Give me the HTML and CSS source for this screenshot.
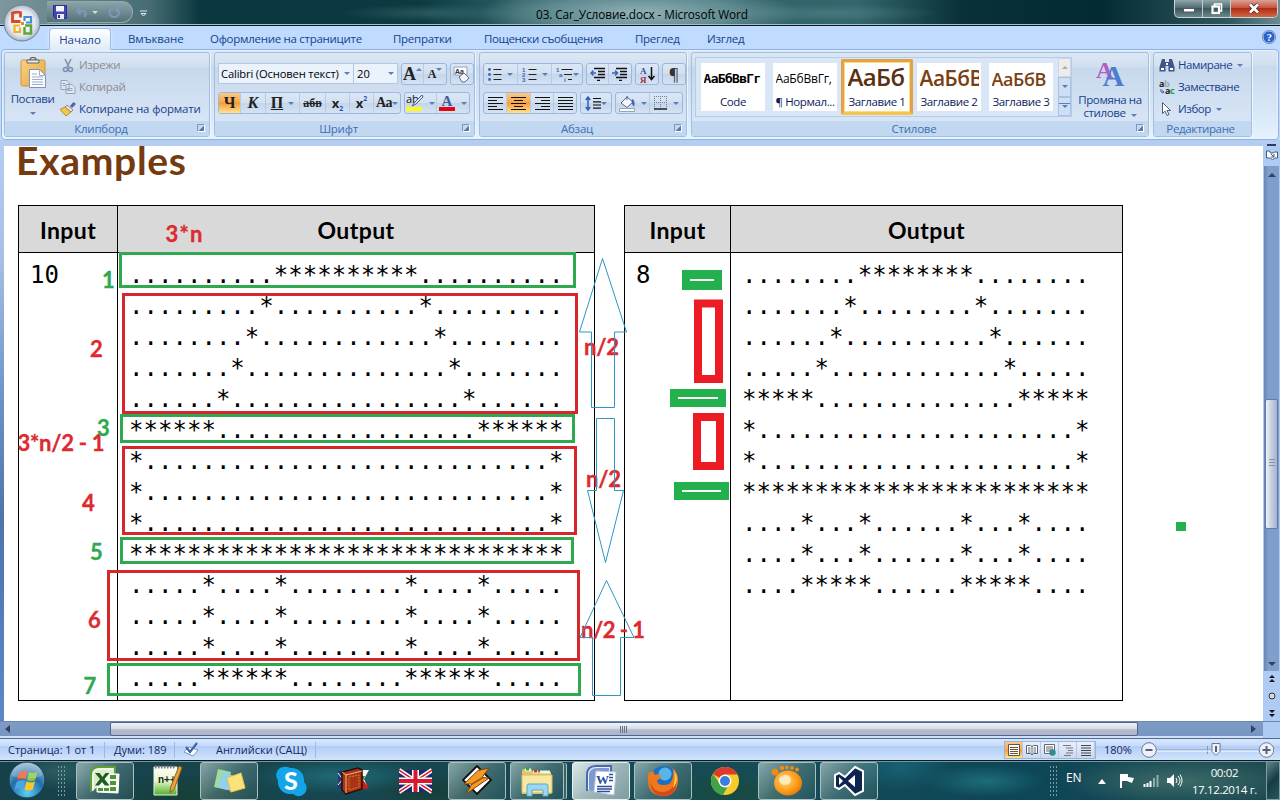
FILE: index.html
```html
<!DOCTYPE html>
<html lang="bg">
<head>
<meta charset="utf-8">
<title>03. Car_Условие.docx - Microsoft Word</title>
<link rel="stylesheet" href="styles.css">
</head>
<body>
<svg width="0" height="0" class="defs">
  <defs>
    <radialGradient id="gOrb" cx=".5" cy=".85" r=".9"><stop offset="0" stop-color="#5fd0f5"/><stop offset=".5" stop-color="#1f6fa8"/><stop offset="1" stop-color="#a9c8d8"/></radialGradient>
    <radialGradient id="gOffice" cx=".5" cy=".5" r=".5"><stop offset="0" stop-color="#fff"/><stop offset=".7" stop-color="#e4e9f1"/><stop offset="1" stop-color="#aab7cb"/></radialGradient>
    <radialGradient id="gGom" cx=".4" cy=".4" r=".7"><stop offset="0" stop-color="#ffd77a"/><stop offset=".6" stop-color="#ff9d1c"/><stop offset="1" stop-color="#e26f00"/></radialGradient>
    <linearGradient id="gNote" x1="0" y1="0" x2="0" y2="1"><stop offset="0" stop-color="#fff"/><stop offset=".5" stop-color="#e6f6c8"/><stop offset="1" stop-color="#4fae28"/></linearGradient>
    <linearGradient id="gClip" x1="0" y1="0" x2="1" y2="1"><stop offset="0" stop-color="#f9d283"/><stop offset="1" stop-color="#e5a640"/></linearGradient>
  </defs>
</svg>

<header class="titlebar">
  <div class="qat">
    <svg width="14" height="14" viewBox="0 0 14 14"><path d="M.5.5h13v13h-11l-2-2z" fill="#4443b5" stroke="#302f8c"/><path d="M3 1h8v5.5H3z" fill="#f3f5ff"/><path d="M4 9h7v5H4z" fill="#e8ebfa"/><path d="M5 10h2v3H5z" fill="#302f8c"/></svg>
    <svg class="undo" width="13" height="12" viewBox="0 0 14 14"><path d="M2 6h6a3.500 3.500 0 0 1 2 6.500M6 1.500L1.500 6 6 10" fill="none" stroke="#7e98b8" stroke-width="2.400"/></svg>
    <i class="tri light"></i>
    <svg class="redo" width="13" height="13" viewBox="0 0 14 14"><path d="M3 3.500a5 5 0 1 0 7.500 0M6 3H1.500M13.500 1.500h-4v5" fill="none" stroke="#7e98b8" stroke-width="2.300"/></svg>
  </div>
  <svg class="qat-more" width="7" height="7" viewBox="0 0 7 7"><path d="M0 1h7M1 3.500h5L3.500 6z" stroke="#d7eaf0" fill="none"/></svg>
  <div class="title">03. Car_Условие.docx - Microsoft Word</div>
  <div class="winbtns">
    <span class="wb"><svg width="12" height="12" viewBox="0 0 12 12"><rect x=".5" y="5.500" width="11" height="3.500" fill="#fff" stroke="#556"/></svg></span>
    <span class="wb"><svg width="12" height="12" viewBox="0 0 12 12"><path d="M3.500 3V1h7v7H9" fill="none" stroke="#fff" stroke-width="1.600"/><rect x="1.500" y="3.500" width="6.500" height="6.500" fill="none" stroke="#fff" stroke-width="2.200"/></svg></span>
    <span class="wb close"><svg width="12" height="11" viewBox="0 0 12 11"><path d="M2 1.500l8 8M10 1.500l-8 8" stroke="#4a2020" stroke-width="4.200"/><path d="M2 1.500l8 8M10 1.500l-8 8" stroke="#fff" stroke-width="2.800"/></svg></span>
  </div>
</header>
<svg class="office" width="40" height="40" viewBox="0 0 40 40"><circle cx="20" cy="20" r="18" fill="url(#gOffice)" stroke="#6d8098"/><g fill="none"><path d="M18.500 18.500h-8v-8.500q4-1.500 8-.5v5" stroke="#dc4a1b" stroke-width="2.800"/><path d="M22.500 18v-4h6.500v5.500h-5" stroke="#4a8ed2" stroke-width="2.200"/><path d="M18 22.500h-5.500v6.500H18v-4.500" stroke="#f0b41a" stroke-width="2.200"/><path d="M22.500 24v6.500h6.500v-8h-6" stroke="#5da63a" stroke-width="2.500"/></g><path d="M19 19h3v3h-3z" fill="#e8852a"/></svg>

<nav class="tabs">
  <span class="tab active">Начало</span>
  <span class="tab t1">Вмъкване</span><span class="tab t2">Оформление на страниците</span><span class="tab t3">Препратки</span><span class="tab t4">Пощенски съобщения</span><span class="tab t5">Преглед</span><span class="tab t6">Изглед</span>
  <svg class="help" width="14" height="14" viewBox="0 0 14 14"><circle cx="7" cy="7" r="6.200" fill="#2c63c8" stroke="#dbe8fb"/><circle cx="7" cy="7" r="6.700" fill="none" stroke="#3b5f9c" stroke-width=".6"/><text x="7" y="11" text-anchor="middle" class="q">?</text></svg>
</nav>

<section class="ribbon">
  <div class="group g-clip">
    <div class="gbody">
      <div class="paste">
        <svg width="28" height="32" viewBox="0 0 28 32"><rect x="1" y="3" width="24" height="26" rx="1.500" fill="url(#gClip)" stroke="#c99a3f"/><path d="M7 3h12v3H7z" fill="#e9e9ec" stroke="#63656b"/><path d="M10 3a3 2.600 0 0 1 6 0" fill="none" stroke="#63656b" stroke-width="1.400"/><path d="M9.500 12.500h10l6 6v12h-16z" fill="#fbfcff" stroke="#7e93b3"/><path d="M19.500 12.500v6h6M12 17h5M12 20h11M12 22.500h11M12 25h11M12 27.500h11" fill="none" stroke="#9cafc9"/></svg>
        <span>Постави</span><i class="tri"></i>
      </div>
      <div class="cliplist">
        <div class="off"><svg width="14" height="15" viewBox="0 0 14 15"><path d="M4 1l4 8M10 1L6 9" stroke="#7f93ad" stroke-width="1.600"/><circle cx="4.500" cy="11.500" r="2" fill="none" stroke="#7a90ae" stroke-width="1.500"/><circle cx="9.500" cy="11.500" r="2" fill="none" stroke="#7a90ae" stroke-width="1.500"/></svg><span class="cut">Изрежи</span></div>
        <div class="off"><svg width="15" height="14" viewBox="0 0 15 14"><path d="M.5.5h6l2 2v7h-8zM5.500 4.500h6l3 3v6h-9z" fill="#dde6f1" stroke="#93a4bb"/><path d="M2 3.500h3M2 5.500h3M7 8.500h5M7 10.500h5" stroke="#93a4bb"/></svg><span class="cut">Копирай</span></div>
        <div><svg width="16" height="14" viewBox="0 0 16 14"><path d="M10 4l3.500-4L16 2l-4 4z" fill="#4d64a0"/><path d="M7 3l6 5-2 2-6-5z" fill="#e8e8ea" stroke="#666" stroke-width=".7"/><path d="M5 5L0 7.500l6 6.500 5-4z" fill="#f2c94f" stroke="#a47a1d" stroke-width=".8"/></svg><span class="fmt">Копиране на формати</span></div>
      </div>
    </div>
    <div class="glabel"><span>Клипборд</span><i class="dlg"></i></div>
  </div>

  <div class="group g-font">
    <div class="gbody rows">
      <div class="row">
        <div class="combo c1"><span>Calibri (Основен текст)</span><i class="tri"></i></div><div class="combo c2"><span>20</span><i class="tri"></i></div>
        <div class="box m3"><b class="btn ser w22"><em class="n17">A</em><i class="up"></i></b><b class="btn ser w22"><em class="n12">A</em><i class="tri tp"></i></b></div>
        <div class="box m3"><b class="btn w22"><svg width="18" height="17" viewBox="0 0 18 17"><path d="M1 1h13v8H1z" fill="#fff" stroke="#8ba2c4"/><text x="2" y="8" class="aa">Aa</text><path d="M6 11l5-4 5 5-4 4H9z" fill="#f5f5f8" stroke="#5a6d8c"/></svg></b></div>
      </div>
      <div class="row r2">
        <div class="box"><b class="btn ser on w22"><em class="n15">Ч</em></b><b class="btn ser w25"><em class="n15 it">К</em></b><b class="btn ser w34"><em class="n15 un">П</em><i class="tri ml"></i></b><b class="btn ser w27"><em class="n12 st">абв</em></b><b class="btn w24"><em class="n13">x</em><sub>2</sub></b><b class="btn w24"><em class="n13">x</em><sup>2</sup></b><b class="btn ser w27"><em class="n14">Aa</em><i class="tri"></i></b></div>
        <div class="box m3"><b class="btn w33"><svg width="18" height="18" viewBox="0 0 18 18"><text x="0" y="9" class="ab">ab</text><path d="M16 1L9 8l-3 4 4-2 7-7z" fill="#dfe6f3" stroke="#4c5e84"/><path d="M0 13h16v4H0z" fill="#fdfb1c"/></svg><i class="tri ml"></i></b><b class="btn w33"><svg width="17" height="18" viewBox="0 0 17 18"><text x="8" y="11.500" text-anchor="middle" class="fa">A</text><path d="M0 13h16v4H0z" fill="#e4060f"/></svg><i class="tri ml"></i></b></div>
      </div>
    </div>
    <div class="glabel"><span>Шрифт</span><i class="dlg"></i></div>
  </div>

  <div class="group g-par">
    <div class="gbody rows">
      <div class="row">
        <div class="box"><b class="btn w34"><svg width="14" height="13" viewBox="0 0 14 13"><path d="M5.500 1.500h8M5.500 6.500h8M5.500 11.500h8" stroke="#222"/><circle cx="1.500" cy="1.500" r="1.400" fill="#3f62ad"/><circle cx="1.500" cy="6.500" r="1.400" fill="#3f62ad"/><circle cx="1.500" cy="11.500" r="1.400" fill="#3f62ad"/></svg><i class="tri ml"></i></b><b class="btn w34"><svg width="15" height="15" viewBox="0 0 15 15"><path d="M6.500 2.500h8M6.500 7.500h8M6.500 12.500h8" stroke="#222"/><g class="num"><text x="0" y="5">1</text><text x="0" y="10">2</text><text x="0" y="15">3</text></g></svg><i class="tri ml"></i></b><b class="btn w30"><svg width="17" height="15" viewBox="0 0 17 15"><path d="M5.500 2.500h11M8 7.500h8M12 12.500h4" stroke="#222"/><g class="num"><text x="0" y="5">1</text><text x="3" y="10">a</text><text x="8" y="15">i</text></g></svg><i class="tri"></i></b></div>
        <div class="box m3"><b class="btn w22"><svg width="16" height="14" viewBox="0 0 16 14"><path d="M4 1.500h11M8 4.500h7M8 7.500h7M4 10.500h11M7 13.500h3" stroke="#111" stroke-width="1.500"/><path d="M6 6H1M3.500 3.500L1 6l2.500 2.500" stroke="#3a62b4" stroke-width="1.500" fill="none"/></svg></b><b class="btn w22"><svg width="16" height="14" viewBox="0 0 16 14"><path d="M4 1.500h11M8 4.500h7M8 7.500h7M4 10.500h11M7 13.500h3" stroke="#111" stroke-width="1.500"/><path d="M0 6h5M3 3.500L5.500 6 3 8.500" stroke="#3a62b4" stroke-width="1.500" fill="none"/></svg></b></div>
        <div class="box m3"><b class="btn w22"><svg width="15" height="17" viewBox="0 0 15 17"><text x="0" y="8" class="srt b">А</text><text x="0" y="17" class="srt r">Я</text><path d="M11.500 1v12M8.500 10l3 3.500 3-3.500" fill="none" stroke="#111" stroke-width="1.500"/></svg></b></div>
        <div class="box m3"><b class="btn w22"><em class="pil">¶</em></b></div>
      </div>
      <div class="row r2">
        <div class="box"><b class="btn w23"><svg width="15" height="13" viewBox="0 0 15 13"><path d="M0 .5h15M0 3.500h9M0 6.500h15M0 9.500h9M0 12.500h15" stroke="#111"/></svg></b><b class="btn on w24"><svg width="15" height="13" viewBox="0 0 15 13"><path d="M0 .5h15M3 3.500h9M0 6.500h15M3 9.500h9M0 12.500h15" stroke="#111"/></svg></b><b class="btn w23"><svg width="15" height="13" viewBox="0 0 15 13"><path d="M0 .5h15M6 3.500h9M0 6.500h15M6 9.500h9M0 12.500h15" stroke="#111"/></svg></b><b class="btn w22"><svg width="15" height="13" viewBox="0 0 15 13"><path d="M0 .5h15M0 3.500h15M0 6.500h15M0 9.500h15M0 12.500h15" stroke="#111"/></svg></b></div>
        <div class="box m3"><b class="btn w30"><svg width="16" height="17" viewBox="0 0 16 17"><path d="M8 3.500h8M8 6.800h8M8 10h8M8 13.200h8" stroke="#111" stroke-width="1.200"/><path d="M3 2v13M.8 5L3 2l2.200 3M.8 12L3 15l2.200-3" fill="none" stroke="#2f5fb3" stroke-width="1.500"/></svg><i class="tri"></i></b></div>
        <div class="box m3"><b class="btn w34"><svg width="17" height="17" viewBox="0 0 17 17"><path d="M2 8l6-6 6 5-6 5.500z" fill="#f6f8fb" stroke="#51658a"/><path d="M8 5V1" stroke="#51658a"/><path d="M13 4c3 1 3 5 2 8-1-2-3-3-2-8z" fill="#3a66b6"/><path d="M.5 13.500h15v3H.5z" fill="#fff" stroke="#97a3b6"/></svg><i class="tri ml"></i></b><b class="btn w33"><svg width="14" height="14" viewBox="0 0 14 14"><path d="M.5 0v13M6.500 0v13M12.500 0v13M0 .5h13M0 6.500h13" stroke="#6d7c92" stroke-dasharray="1 1"/><path d="M0 13h13" stroke="#222" stroke-width="1.500"/></svg><i class="tri ml"></i></b></div>
      </div>
    </div>
    <div class="glabel"><span>Абзац</span><i class="dlg"></i></div>
  </div>

  <div class="group g-sty">
    <div class="gbody">
      <div class="gallery">
        <div class="sty"><div class="s code">АаБбВвГг</div><div class="nm">Code</div></div>
        <div class="sty"><div class="s norm">АаБбВвГг,</div><div class="nm">¶ Нормал...</div></div>
        <div class="sty sel"><div class="s h1">АаБб</div><div class="nm">Заглавие 1</div></div>
        <div class="sty"><div class="s h2">АаБбВ</div><div class="nm">Заглавие 2</div></div>
        <div class="sty"><div class="s h3">АаБбВ</div><div class="nm">Заглавие 3</div></div>
        <div class="gscroll"><span class="dis"><i class="up"></i></span><span><i class="tri"></i></span><span class="more"><i class="tri"></i></span></div>
      </div>
      <div class="change">
        <svg width="30" height="30" viewBox="0 0 30 30"><text x="1" y="20" class="ca">A</text><text x="7.500" y="28" class="cb">A</text></svg>
        <span class="cl1">Промяна на</span><span class="cl2">стилове<i class="tri ml"></i></span>
      </div>
    </div>
    <div class="glabel"><span>Стилове</span><i class="dlg"></i></div>
  </div>

  <div class="group g-edit">
    <div class="gbody"><div class="cliplist">
      <div><svg width="16" height="14" viewBox="0 0 16 14"><path d="M3 1h3v3h4V1h3l2.500 8v4.500h-6V8h-3v5.500h-6V9z" fill="#3e5688"/><path d="M2 10h3v2H2zM11 10h3v2h-3zM7 5h2v2H7z" fill="#fff"/></svg><span>Намиране</span><i class="tri ml"></i></div>
      <div><svg width="16" height="15" viewBox="0 0 16 15"><text x="0" y="7" class="rep">a<tspan fill="#9aa">b</tspan></text><text x="6" y="14" class="rep">a<tspan fill="#1fa32a">c</tspan></text><path d="M2 9v3h3M3.500 10.500L5 12l-1.500 1.500" fill="none" stroke="#3a5ea8"/></svg><span>Заместване</span></div>
      <div><svg width="16" height="14" viewBox="0 0 16 14"><path d="M3.500.5v11l2.600-2.400L8 13.500l2-1-2-4h3.500z" fill="#fff" stroke="#4b5f80"/></svg><span>Избор</span><i class="tri ml"></i></div>
    </div></div>
    <div class="glabel"><span>Редактиране</span></div>
  </div>
</section>

<main class="work">
  <div class="doc">
    <h1>Examples</h1>
    <div class="tables">
      <div class="tbl left">
        <div class="th">Input</div><div class="th">Output</div>
        <div class="td">10</div>
        <pre class="td out">..........**********..........
.........*..........*.........
........*............*........
.......*..............*.......
......*................*......
******..................******
*............................*
*............................*
*............................*
******************************
.....*....*........*....*.....
.....*....*........*....*.....
.....*....*........*....*.....
.....******........******.....</pre>
      </div>
      <div class="tbl right">
        <div class="th">Input</div><div class="th">Output</div>
        <div class="td">8</div>
        <pre class="td out">........********........
.......*........*.......
......*..........*......
.....*............*.....
*****..............*****
*......................*
*......................*
************************
....*...*......*...*....
....*...*......*...*....
....*****......*****....</pre>
      </div>
    </div>
  </div>
  <aside class="vscroll">
    <span class="split"></span>
    <svg class="ruler" width="12" height="11" viewBox="0 0 12 11"><path d="M.5 1h3l1 2h3l1-1h3v6h-3l-2 2-2-2h-4z" fill="#fff" stroke="#44577d"/><path d="M5 4l3 3M8 4v3H5" stroke="#44577d" fill="none"/></svg>
    <div class="vtrack"><i class="up dk"></i><div class="vthumb"></div><i class="tri dk"></i></div>
    <div class="vnav"><svg width="8" height="8" viewBox="0 0 8 8"><path d="M4 0l3 3H1zM4 4l3 3H1z" fill="#111"/></svg><svg width="8" height="8" viewBox="0 0 8 8"><circle cx="4" cy="4" r="3" fill="#d5d9df" stroke="#333"/></svg><svg width="8" height="8" viewBox="0 0 8 8"><path d="M4 4L1 1h6zM4 8L1 5h6z" fill="#111"/></svg></div>
  </aside>
</main>
<svg class="marks" width="1280" height="560" viewBox="0 150 1280 560">
  <g fill="none" stroke-width="3" stroke="#2ea94f">
    <rect x="120.500" y="253.500" width="454" height="33"/><rect x="121.500" y="415.500" width="452" height="26"/><rect x="121.500" y="538.500" width="451" height="24"/><rect x="108.500" y="664.500" width="471" height="30"/>
  </g>
  <g fill="none" stroke-width="3" stroke="#d8262d">
    <rect x="123.500" y="294.500" width="453" height="118"/><rect x="123.500" y="447.500" width="452" height="86"/><rect x="108.500" y="571.500" width="470" height="88"/>
  </g>
  <g fill="#22b14c"><path d="M682 270h40v20h-40zM670 389h56v18h-56zM674 482h55v18h-55zM1176 522h10v9h-10z"/></g>
  <path d="M690 280h24M678 398h40M682 491h39" stroke="#fff" stroke-width="2"/>
  <g fill="none" stroke="#ed1c24" stroke-width="8"><rect x="698" y="303.500" width="21" height="75.500"/><rect x="697" y="417" width="23" height="49"/></g>
  <g class="lab red"><text x="165.500" y="242" textLength="37">3*n</text><text x="90" y="357">2</text><text x="17.500" y="451" textLength="87">3*n/2 - 1</text><text x="82" y="511">4</text><text x="88" y="628">6</text><text x="584" y="355" textLength="35">n/2</text><text x="586" y="487" textLength="35">n/2</text><text x="581" y="638" textLength="64">n/2 - 1</text></g>
  <g class="lab green"><text x="102" y="287.500">1</text><text x="97" y="435.500">3</text><text x="90" y="559.500">5</text><text x="83.500" y="693.500">7</text></g>
  <g fill="none" stroke="#2d97c2"><path d="M602.500 258.500l24 73.500h-12v75.500h-23V332h-12zM596.500 418.500h18v72h9l-18 72-18-72h9zM606.500 580.500l27.500 57h-13.500v58h-28v-58H580z"/></g>
</svg>

<div class="hscroll"><div class="htrack"><i class="lt"></i><div class="hthumb"><u></u><u></u><u></u><u></u></div><i class="rt"></i></div></div>

<footer class="status">
  <span class="st1">Страница: 1 от 1</span><span class="st2">Думи: 189</span>
  <span class="st3"><svg width="17" height="15" viewBox="0 0 17 15"><path d="M1 10l5-5 9 3-5 6z" fill="#fff" stroke="#7b92bb"/><path d="M3 5l4 5 7-9" fill="none" stroke="#3e62a8" stroke-width="2.200"/></svg></span><span class="st4">Английски (САЩ)</span>
  <span class="views">
    <b class="on"><svg width="12" height="12" viewBox="0 0 12 12"><path d="M.5.5h11v11H.5z" fill="#fff" stroke="#67543a"/><path d="M2 3.500h8M2 5.500h8M2 7.500h8M2 9.500h8" stroke="#67543a"/></svg></b>
    <b><svg width="12" height="12" viewBox="0 0 12 12"><path d="M.5 1.500h4l1.500 1 1.500-1h4v8h-4L6 11 4.500 9.500h-4zM6 2.500V11M2 4h2.500M2 6h2.500M2 8h2.500M7.500 4H10M7.500 6H10M7.500 8H10" fill="#fff" stroke="#5a6473"/></svg></b>
    <b><svg width="12" height="12" viewBox="0 0 12 12"><path d="M.5.5h10v9H.5z" fill="#fff" stroke="#666"/><path d="M2 3h7M2 5h7M2 7h4" stroke="#666"/><circle cx="8.500" cy="8.500" r="3.200" fill="#2f8d8f"/></svg></b>
    <b><svg width="12" height="12" viewBox="0 0 12 12"><path d="M1 1.500h8M4 4h7M6 6.500h5M4 9h7M2 11.500h7" stroke="#777"/></svg></b>
    <b><svg width="12" height="12" viewBox="0 0 12 12"><path d="M1 1.500h10M1 4h10M1 6.500h10M1 9h10M1 11.500h10" stroke="#444"/></svg></b>
  </span>
  <span class="pct">180%</span>
  <svg class="zoomer" width="134" height="18" viewBox="0 0 134 18"><path d="M17 9h101M67.500 5v8" stroke="#8295b8"/><path d="M17 10h101" stroke="#fff"/><g fill="#eef2f8" stroke="#6b7b94"><circle cx="9" cy="9" r="7.300"/><circle cx="126.500" cy="9" r="7.300"/><path d="M72 2.500h8v8l-4 4-4-4z"/></g><path d="M5.500 9h7M122.500 9h8M126.500 5v8M76 5v6" stroke="#54627c" stroke-width="2"/></svg>
</footer>

<footer class="taskbar">
  <div class="start"><svg width="38" height="38" viewBox="0 0 38 38"><circle cx="19" cy="19" r="18" fill="url(#gOrb)" stroke="#17394a"/><path d="M11 11.500q4.500-3 8.500-1l-2 8q-4-2-8.500 1z" fill="#e8552a"/><path d="M21 11q4 2 8.500 0l-2.200 8q-4 2-8.300 0z" fill="#8cc63c"/><path d="M8.500 21q4.500-3 8.500-1l-2 8q-4-2-8.500 1z" fill="#4aa5e3"/><path d="M18.500 20.500q4 2 8.500 0l-2.200 8q-4 2-8.300 0z" fill="#fbc62a"/><path d="M4 15a15 13 0 0 1 30 0q-15 5-30 0z" fill="#fff" opacity=".22"/></svg></div>
  <i class="grip"></i>
  <div class="slots">
    <div class="slot run"><svg width="32" height="32" viewBox="0 0 32 32"><path d="M2 27V10q0-8 8-8h16v6" fill="#dcefcf" stroke="#5ca033" stroke-width="2"/><path d="M4 26V10q0-6 6-6h14" fill="none" stroke="#fff"/><path d="M5 7l15-1v15H5z" fill="#d9ecca"/><path d="M17 9h13l-1 19-21-1v-6" fill="#f6fbf2" stroke="#fff"/><path d="M21 10h6v4h-6zM21 16h6v4h-6zM21 22h6v4h-6zM9 23h5v3H9zM15 23h5v3h-5z" fill="#4f9438"/><path d="M6 8h4.500l3 4 3-4h4L15.500 14l5 6.500H16L13 17l-3 3.500H6L11 14z" fill="#1f5c1f"/></svg></div>
    <div class="slot"><svg width="32" height="32" viewBox="0 0 32 32"><path d="M3 2h23v28H3z" fill="url(#gNote)" stroke="#e8f2e3"/><path d="M4 2h21" stroke="#777" stroke-width="3" stroke-dasharray="1.500 1.500"/><text x="7" y="18" class="npp">n++</text><path d="M28 1l3 1.500-8 22-4 3 .500-5z" fill="#e8a43b" stroke="#8f5d22"/></svg></div>
    <div class="slot run"><svg width="34" height="32" viewBox="0 0 34 32"><path d="M6 4l13 3-4 18L2 22z" fill="#9edc9b"/><path d="M11 7l13 5-5 14-13-4z" fill="#8fd0ef"/><path d="M15 13l14-5 4 15-14 4z" fill="#fbe27a" stroke="#e7c84a"/></svg></div>
    <div class="slot"><svg width="32" height="32" viewBox="0 0 32 32"><path d="M9 2a8 8 0 0 1 6 1c8-1 15 5 14 14a8 8 0 0 1-11 12C9 30 2 24 3 15A8 8 0 0 1 9 2z" fill="#12a5e8"/><text x="16" y="25" text-anchor="middle" class="sky">S</text></svg></div>
    <div class="slot"><svg width="32" height="32" viewBox="0 0 32 32"><path d="M1 6h12v18H1z" fill="#26357e"/><path d="M1 8l9 12M1 20l9-11" stroke="#eee"/><path d="M17 5h15l-5 9 4 9H18z" fill="#f5f3ee"/><path d="M20 11h8l-2 5 1 3h-7z" fill="#288a3a"/><path d="M21 20l5-5 6 8-9 2z" fill="#d21a1d"/><path d="M5 7l16-4 4 2v19l-16 5-4-4z" fill="#a83416" stroke="#2a0d07" stroke-width="1.500"/><path d="M9 9v19M5 7l4 3 16-4" stroke="#e6b98d" fill="none"/><path d="M12 12l10-2v12l-10 3z" fill="none" stroke="#e07a2c" stroke-dasharray="2 1"/></svg></div>
    <div class="slot"><svg width="33" height="32" viewBox="0 0 33 32"><path d="M0 5h33v22H0z" fill="#20286e"/><path d="M0 5l33 22M33 5L0 27" stroke="#fff" stroke-width="4.500"/><path d="M0 5l33 22M33 5L0 27" stroke="#d8182c" stroke-width="1.500"/><path d="M16.500 5v22M0 16h33" stroke="#fff" stroke-width="7"/><path d="M16.500 5v22M0 16h33" stroke="#d8182c" stroke-width="4"/></svg></div>
    <div class="slot run"><svg width="32" height="32" viewBox="0 0 32 32"><path d="M16 1l14 14-14 14L2 15z" fill="#fff" stroke="#111" stroke-width="1.800"/><path d="M28 3l-7 9.500 7 .500L5 29l6-10-8 0L17 5.500z" fill="#f59a23" stroke="#774410"/><path d="M11 19l11-6.500" stroke="#9b5717" stroke-width="1.500"/></svg></div>
    <div class="slot run stack"><svg width="34" height="32" viewBox="0 0 34 32"><path d="M2 6q0-2 2-2h7l2 3h18v22H2z" fill="#e4c465"/><path d="M2 10h30v18H2z" fill="#f8e6a3" stroke="#d9bb62"/><path d="M5 5h6M13 7h5M20 7h10" stroke="#e8f5e0" stroke-width="3"/><path d="M6 4h3" stroke="#36a832" stroke-width="3"/><path d="M14 6h3" stroke="#c93a26" stroke-width="3"/><path d="M7 31V21q0-2 2-2h17q2 0 2 2v10h-5v-6H12v6z" fill="#9bd7ee" stroke="#5aa8cb"/></svg></div>
    <div class="slot run bright"><svg width="32" height="32" viewBox="0 0 32 32"><path d="M2 26V10q0-9 9-9h15v7" fill="#e9effa" stroke="#4769b0" stroke-width="2"/><path d="M4 25V11q0-8 8-8h12v5l-14 1v17z" fill="#7d99cd"/><path d="M11 6l20 1-2 23-20-3z" fill="#fff" stroke="#b9c6df"/><text x="11" y="19" class="wd">W</text><path d="M24 9.500h4M24 12.500h4M24 15.500h4M12 21.500h15M12 24h15M12 26.500h13" stroke="#2b4f99" stroke-width="1.500"/></svg></div>
    <div class="slot run"><svg width="32" height="32" viewBox="0 0 32 32"><circle cx="17" cy="15" r="14" fill="#1d6fc0"/><circle cx="18" cy="9" r="6.500" fill="#59b5e8"/><path d="M2 7q2 1 4-1l2 4q4-2 6 2 0 2-4 3 0 5 6 5 9 1 10-9 1-5-1-8 7 5 6 14-2 14-15 14Q1 30 1 16 0 11 2 7z" fill="#f0781c"/><path d="M3 17q3 10 13 10 9 0 13-11 1 15-13 15-12-1-13-14z" fill="#d9471b"/><path d="M27 5q6 10-1 18 3-10 1-18z" fill="#ffd546"/></svg></div>
    <div class="slot"><svg width="32" height="32" viewBox="0 0 32 32"><circle cx="16" cy="16" r="14" fill="#f8ca2a"/><path d="M16 16L4 9A14 14 0 0 1 28.500 9.500H16z" fill="#dc3a2c"/><path d="M4 9a14 14 0 0 0 10 21l6-11-4 2-5-2z" fill="#3fa34a"/><circle cx="16" cy="16" r="6.500" fill="#fff"/><circle cx="16" cy="16" r="5" fill="#3e7de0"/></svg></div>
    <div class="slot run"><svg width="32" height="32" viewBox="0 0 32 32"><g fill="#f08a16"><circle cx="4" cy="7" r="3.500"/><circle cx="11" cy="3" r="2.300"/><circle cx="16" cy="2.500" r="2"/><circle cx="21" cy="3" r="2"/><circle cx="26" cy="4.500" r="2"/></g><ellipse cx="17" cy="18" rx="14" ry="12.500" fill="url(#gGom)"/><ellipse cx="14" cy="15" rx="6" ry="5" fill="#fff2d0" opacity=".8"/></svg></div>
    <div class="slot run"><svg width="32" height="32" viewBox="0 0 32 32"><path d="M22 2l8 4v20l-8 4L12 20l-6 4-4-2V10l4-2 6 4z" fill="#0f2350" stroke="#fff" stroke-width="2"/><path d="M6 12v8l4-4zM22 10v12l-7-6z" fill="#fff"/></svg></div>
  </div>
  <div class="tray">
    <i class="grip"></i><span class="en">EN</span>
    <svg class="ta" width="8" height="5" viewBox="0 0 8 5"><path d="M4 0l4 5H0z" fill="#fff"/></svg>
    <svg class="tf" width="16" height="15" viewBox="0 0 16 15"><path d="M2 1v14" stroke="#fff" stroke-width="2"/><path d="M3 1h6v3l6 1-2 5-5-2H3z" fill="#fff"/></svg>
    <svg class="tb" width="16" height="13" viewBox="0 0 16 13"><path d="M1.500 13v-3M4.500 13V9M7.500 13V7" stroke="#fff" stroke-width="2"/><path d="M11 13V4M14.500 13V1" stroke="#93aab0" stroke-width="2"/></svg>
    <svg class="tv" width="16" height="15" viewBox="0 0 16 15"><path d="M0 5h3l4-4v13l-4-4H0z" fill="#fff"/><path d="M9 5q2 2.500 0 5M11 3q4 4.500 0 9M13 1.500q4 6 0 12" fill="none" stroke="#fff"/></svg>
    <div class="clock"><span>00:02</span><span>17.12.2014 г.</span></div>
    <i class="desk"></i>
  </div>
</footer>
</body>
</html>
```
FILE: styles.css
```css
*{box-sizing:border-box}
html,body{margin:0;padding:0}
body{width:1280px;height:800px;overflow:hidden;position:relative;display:flex;flex-direction:column;font-family:"Open Sans","Noto Sans",sans-serif;font-size:11.5px;line-height:16px;color:#15428b;background:#bfdbff}
svg{flex:none;display:block}
.defs{position:absolute}
i,em{font-style:normal}
.tri,.up{display:inline-block;flex:none;width:0;height:0;border:3px solid transparent;border-bottom-width:0;border-top-color:#5a7fb5}
.up{border-width:0 3px 3px;border-bottom-color:#5a7fb5}
.tri.light{border-top-color:#d0dde3}
.tri.dk{border-width:4px 4px 0;border-top-color:#33415f}
.up.dk{border-width:0 4px 4px;border-bottom-color:#33415f}
.ml{margin-left:5px}

.titlebar{height:26px;flex:none;display:flex;align-items:flex-start;border-bottom:1px solid #021b22;box-shadow:inset 0 -1px #a5bfc4;background:radial-gradient(ellipse 160px 28px at 640px 13px,rgba(150,182,188,.95),rgba(120,160,166,.65) 60%,transparent),radial-gradient(ellipse 90px 9px at 430px 13px,rgba(90,140,145,.35),transparent),radial-gradient(ellipse 110px 9px at 830px 13px,rgba(110,155,160,.35),transparent),linear-gradient(90deg,#7d989d 0,#476c73 150px,#0a3840 200px,#0c3a42 420px,#2f6067 520px,#33656c 860px,#093139 960px,#042a33 1100px,#31585f 1230px,#6c8c91)}
.qat{width:86px;height:22px;margin:1px 0 0 47px;padding-left:6px;display:flex;align-items:center;gap:8px;border:1px solid #8fa9ae;border-left:0;border-radius:0 11px 11px 0;background:linear-gradient(#8ca3a8,#547279)}
.qat .tri{margin:0 2px 0 -4px}
.qat-more{margin:10px 0 0 7px}
.title{margin:6px 0 0 387px;width:216px;font-size:11.800px;letter-spacing:-.1px;color:#000;white-space:nowrap;text-align:center}
.winbtns{display:flex;margin-left:auto;margin-right:2px;height:18px;border:1px solid #c6d5d8;border-top:0;border-radius:0 0 5px 5px;background:linear-gradient(#91a6aa,#4b666c 50%,#3a575e 50%,#6b878c)}
.wb{display:flex;width:28px;align-items:center;justify-content:center;border-right:1px solid #bdcdd0}
.wb.close{width:46px;border:0;border-radius:0 0 4px 0;background:linear-gradient(#dba196,#c4513a 48%,#b12c13 50%,#d0684a)}
.office{position:absolute;left:2px;top:3px;z-index:2}

.tabs{height:23px;flex:none;display:flex;align-items:center;padding-left:48px;background:#bfdbff;position:relative;letter-spacing:-.28px}
.tab{white-space:nowrap;position:relative;top:1px}
.tab.active{letter-spacing:0;margin-left:1px;height:22px;width:62px;padding-top:3px;text-align:center;border:1px solid #9ebde9;border-bottom:0;border-radius:4px 4px 0 0;background:linear-gradient(#fff,#dfebf9);box-shadow:0 0 3px #e8f4ff}
.t1{margin-left:17px;width:82px;letter-spacing:-.1px}.t2{width:183px}.t3{width:91px}.t4{width:151px;letter-spacing:-.4px}.t5{width:72px}
.help{position:absolute;left:1262px;top:4px}
.q{font:bold 11px "Liberation Serif",serif;fill:#fff}

.ribbon{height:91px;flex:none;display:flex;gap:4px;margin:0 1px;padding:3px 0 4px 2px;border:1px solid #8db2e3;border-radius:4px;background:linear-gradient(#dbe6f4,#cfdded 18%,#c9d9ed 18%,#dcebfa 80%,#e6f4fd);box-shadow:inset 0 0 0 1px rgba(235,246,255,.7);letter-spacing:-.4px}
.group{display:flex;flex-direction:column;height:85px;margin-top:-1px;border:1px solid #a3bfe0;border-radius:3px;box-shadow:1px 0 #edf4fc;background:linear-gradient(#dde8f5,#d0deef 17%,#c8d8ec 18%,#dbe8f8)}
.g-clip{width:206px}.g-font{width:261px}.g-par{width:208px}.g-sty{width:458px}.g-edit{width:99px}
.gbody{flex:1;display:flex;min-height:0}
.glabel{height:15px;flex:none;background:#c1d8f0;color:#3e6db5;display:flex;justify-content:center;position:relative;line-height:15px;padding-right:12px;letter-spacing:-.25px}
.g-edit .glabel{padding:0 4px 0 0;letter-spacing:-.35px}
.dlg{position:absolute;right:4px;top:3px;width:8px;height:8px;border:1px solid #7e99bd;border-right-color:#fff;border-bottom-color:#fff;background:linear-gradient(135deg,transparent 55%,#5c7ba8 55%)}
.paste{width:55px;display:flex;flex-direction:column;align-items:center;padding-top:4px}
.paste span{margin-top:3px;line-height:14px}
.paste .tri{margin-top:6px}
.paste svg{margin-left:2px}
.cliplist{display:flex;flex-direction:column;padding:1px 0 0 0}
.cliplist div{display:flex;align-items:center;height:22px}
.cliplist svg{width:16px}
.cliplist span{margin-left:3px;white-space:nowrap}
.cliplist .off{color:#8d8d8d}
.g-edit .cliplist{padding-left:5px;letter-spacing:-.45px}
.fmt{letter-spacing:-.17px}

.rows{flex-direction:column;padding:10px 0 0 3px}
.row{display:flex;height:22px}
.row.r2{margin-top:7px}
.combo{height:21px;border:1px solid #b3c8e4;background:#eaf2fb;color:#000;display:flex;align-items:center;justify-content:space-between;padding:0 3px;white-space:nowrap;font-size:11.200px;overflow:hidden}
.c1{width:136px;letter-spacing:-.15px;padding-left:2px}.c2{width:44px;border-left:0;letter-spacing:0}
.box{display:flex;border:1px solid #9bb7de;border-radius:3px;background:linear-gradient(#dbe7f5,#d2e0f1 48%,#c4d5eb 50%,#d4e3f4);height:22px}
.m3{margin-left:3px}
.btn{display:flex;align-items:center;justify-content:center;font-weight:normal;color:#222;height:20px;border-right:1px solid #b6cbe5;letter-spacing:0;line-height:20px}
.btn:last-child{border-right:0}
.w22{width:22px}.w23{width:23px}.w24{width:24px}.w25{width:25px}.w27{width:26px}.w30{width:30px}.w33{width:32px}.w34{width:34px}
.ser{font-family:"Liberation Serif",serif;font-weight:bold}
.n17{font-size:18px}.n12{font-size:12px}.n15{font-size:16px}.n14{font-size:14px;letter-spacing:-.5px}.n13{font-size:13px;font-weight:bold}
.it{font-style:italic}.un{text-decoration:underline}.st{text-decoration:line-through}
.up{align-self:flex-start;margin-top:4px}.tp{align-self:flex-start;margin-top:4px}
.btn sub,.btn sup{font-size:7px;color:#2b50b0;line-height:8px;font-weight:bold}
.btn sub{align-self:flex-end}.btn sup{align-self:flex-start;margin-top:2px}
.on{background:linear-gradient(#f8c98b,#fba94a 45%,#f9993a 50%,#fee58c)}
.aa{font:bold 7px "Open Sans",sans-serif;fill:#333}
.ab{font:11px "Open Sans",sans-serif;fill:#111}
.fa{font:bold 15px "Liberation Serif",serif;fill:#3d5c9c}
.num text{font:bold 6px "Liberation Sans",sans-serif;fill:#3f62ad}
.srt{font:bold 9px "Liberation Serif",serif}.b{fill:#2f5597}.r{fill:#a03040}
.pil{font-size:16px;color:#333}

.gallery{display:flex;height:60px;width:377px;margin:4px 0 0 3px;border:1px solid #b6cbe6;background:#d8e6f6;padding-left:1px}
.sty{width:64px;height:48px;margin:5px 4px;background:#fff;display:flex;flex-direction:column;align-items:center;overflow:hidden;white-space:nowrap;color:#000}
.sel{width:72px;height:56px;margin:1px 0;border:3px solid #e3a344;border-bottom-color:#f7c54c;border-radius:2px;box-shadow:inset 0 0 0 1px #f9dc87}
.s{height:30px;line-height:32px;width:59px;overflow:hidden}
.sty .nm{color:#0b1c5c;line-height:17px;letter-spacing:-.38px}
.code{font:bold 13px/32px "DejaVu Sans Mono",monospace;letter-spacing:-.7px}
.norm{font-size:12px;letter-spacing:-.2px}
.h1{font-size:24px;line-height:30px;color:#5a3011;font-weight:600;letter-spacing:-.6px;height:31px}
.h2{font-size:21px;color:#7b3f14;font-weight:600;line-height:30px;letter-spacing:-.5px}
.h3{font-size:18px;color:#7b3f14;font-weight:600;letter-spacing:-.4px}
.gscroll{width:13px;display:flex;flex-direction:column;margin-left:auto}
.gscroll span{flex:1;display:flex;align-items:center;justify-content:center;border:1px solid #a9c2e2;background:#cfdff3}
.gscroll .dis{background:#ececec;border-color:#d0d7e0}
.gscroll .up{align-self:center;margin:0;border-bottom-color:#aaa}
.more{box-shadow:inset 0 5px #cfdff3,inset 0 6px #5a7fb5}
.change{width:72px;margin-left:2px;display:flex;flex-direction:column;align-items:center;padding-top:5px;white-space:nowrap}
.change span{line-height:13px}
.cl1{margin-top:5px}
.ca{font:bold 24px "Liberation Serif",serif;fill:#b05fc0}
.cb{font:bold 30px "Liberation Serif",serif;fill:#4a7fd0}
.rep{font:bold 9px "Open Sans",sans-serif;fill:#222}

.work{height:581px;flex:none;display:flex;padding:6px 0 0 4px;background:linear-gradient(#b4cdf0,#a7c0e4 20%,#6b92c8 45%,#4d74ad 65%,#5c87c6)}
.doc{width:1259px;background:#fff;padding-left:14px;color:#000;overflow:hidden}
h1{margin:-6px 0 0 -2px;height:65px;font:bold 39px/40px Lato,sans-serif;color:#753a10;letter-spacing:.7px}
.tables{display:flex;gap:29px}
.tbl{display:grid;grid-template-rows:47px 448px;border:1px solid #000;border-width:1px 0 0 1px}
.left{grid-template-columns:99px 477px}
.right{grid-template-columns:106px 392px}
.th,.td{border:1px solid #000;border-width:0 1px 1px 0}
.th{background:#d9d9d9;text-align:center;font:bold 23px/48px Lato,sans-serif;letter-spacing:.4px}
.td{margin:0;padding:7px 0 0 11px;font:24px/31px "DejaVu Sans Mono",monospace;letter-spacing:.03px;white-space:pre}
.vscroll{width:17px;background:#aecbf3;display:flex;flex-direction:column;align-items:center}
.split{width:9px;height:2px;background:#2b3c5e;margin-top:-2px}
.ruler{margin-top:4px}
.vtrack{width:15px;height:505px;margin-top:5px;background:linear-gradient(90deg,#6687b8,#7f9fca 30%,#7f9fca);display:flex;flex-direction:column;align-items:center}
.vtrack .up{align-self:center;margin-top:7px}
.vthumb{width:13px;height:130px;margin:222px 0 auto;border:1px solid #5e7ba9;border-radius:2px;background:repeating-linear-gradient(#8292ac 0 1px,transparent 1px 3px) 3px 59px/6px 9px no-repeat,linear-gradient(90deg,#eef2f8,#c5cfde 50%,#a6b3c8)}
.vtrack .tri{margin-bottom:5px}
.vnav{display:flex;flex-direction:column;gap:9px;margin-top:4px}
.marks{position:absolute;left:0;top:150px}
.lab{font:bold 22px Lato,sans-serif}
.red{fill:#dd2a31;stroke:#dd2a31;stroke-width:.35px}.green{fill:#2ea94f;stroke:#2ea94f;stroke-width:.35px}

.hscroll{height:17px;flex:none;background:#aecbf3;border-top:1px solid #6d87ae}
.htrack{width:1263px;height:16px;background:linear-gradient(#7f9cc9,#7695c0);display:flex;align-items:center;justify-content:space-between;padding:0 7px 0 5px;border-bottom:2px solid #cfe0f7}
.lt,.rt{border:4px solid transparent;border-left:0;border-right:5px solid #33415f}
.rt{border-left:5px solid #33415f;border-right:0}
.hthumb{width:1028px;height:14px;margin-right:14px;border:1px solid #50648c;border-radius:2px;background:linear-gradient(#f1f4f8,#d3dae4 50%,#b3bdcd 55%,#aab5c8);display:flex;gap:1px;justify-content:center;align-items:center}
.hthumb u{width:1px;height:7px;background:#66758f}
.status{height:22px;flex:none;display:flex;align-items:center;color:#15285e;font-size:11px;white-space:nowrap;border-top:1px solid #4c6ca0;background:linear-gradient(#d9e7fb,#c5dafb 33%,#b0cdf8 34%,#d2e3fb);letter-spacing:-.03px}
.st1{width:105px;padding-left:8px;border-right:1px solid #9ab8e4}
.st2{width:70px;padding-left:9px;border-right:1px solid #9ab8e4}
.st3{width:41px;padding-left:8px}
.st4{width:100px;border-right:1px solid #9ab8e4}
.views{display:flex;margin-left:688px;background:linear-gradient(#e9f0fa,#c8d9f1);border:1px solid #9bb4db;height:18px}
.views b{width:18px;display:flex;align-items:center;justify-content:center;border-right:1px solid #b5c9e6}
.pct{width:36px;margin-left:8px}
.zoomer{margin-left:0}

.taskbar{height:40px;flex:none;display:flex;border-top:1px solid #071c25;box-shadow:inset 0 1px #72989c;background:radial-gradient(ellipse 80px 25px at 190px 35px,#163f35,transparent),radial-gradient(ellipse 50px 20px at 60px 10px,#2c5d63,transparent),radial-gradient(ellipse 60px 20px at 430px 30px,#173e37,transparent),radial-gradient(ellipse 90px 18px at 340px 15px,#1f6a74,transparent),radial-gradient(ellipse 70px 18px at 730px 30px,#1a4a3d,transparent),radial-gradient(ellipse 55px 25px at 900px 5px,#176174,transparent),radial-gradient(ellipse 60px 16px at 985px 20px,#1d6c7a,transparent),radial-gradient(ellipse 120px 25px at 1180px 20px,#3d6b68,transparent),linear-gradient(90deg,#17414a,#164c56 60%,#0d4657 80%,#1e4a51)}
.start{width:55px;padding:0 0 0 8px}
.grip{display:block;width:9px;height:32px;margin:4px 0 0 2px;background:radial-gradient(circle,#7c9ba0 .7px,transparent 1px) 0 0/3px 4px}
.slots{display:flex;margin-left:8px}
.slot{width:62px;height:39px;display:flex;align-items:center;justify-content:center;position:relative}
.slot svg{position:relative;margin-top:1px}
.run{width:58px;height:38px;margin:1px 2px 0;border:1px solid #a9bfc0;border-radius:3px;background:linear-gradient(135deg,rgba(210,228,225,.6),rgba(140,175,172,.35) 50%,rgba(70,115,115,.25))}
.run svg{margin-top:0}
.bright{background:linear-gradient(135deg,#dce7e8,#9fb8ba 50%,#7d9da1);border-color:#e8f0f0}
.stack{width:54px;margin-right:6px;box-shadow:3px 0 0 -1px #3a6268,4px 0 0 -1px #a9bfc0}
.npp{font:bold 10px "Liberation Sans",sans-serif;fill:#222}
.sky{font:900 25px Lato,sans-serif;fill:#fff}
.wd{font:bold 13px "Liberation Serif",serif;fill:#2b4f99}
.tray{display:flex;margin-left:auto;width:233px;color:#fff;align-items:flex-start}
.en{margin:9px 0 0 8px;width:20px;line-height:16px;font-size:12px}
.ta{margin:18px 0 0 12px}.tf{margin:12px 0 0 13px}.tb{margin:13px 0 0 8px}.tv{margin:12px 0 0 8px}
.clock{width:84px;display:flex;flex-direction:column;align-items:center;padding-top:3px;line-height:17px;white-space:nowrap;letter-spacing:-.35px}
.desk{width:14px;height:39px;margin-left:auto;border:1px solid #7f9ea2;background:linear-gradient(135deg,#64868a,#173c45 50%,#2a555b)}
```
